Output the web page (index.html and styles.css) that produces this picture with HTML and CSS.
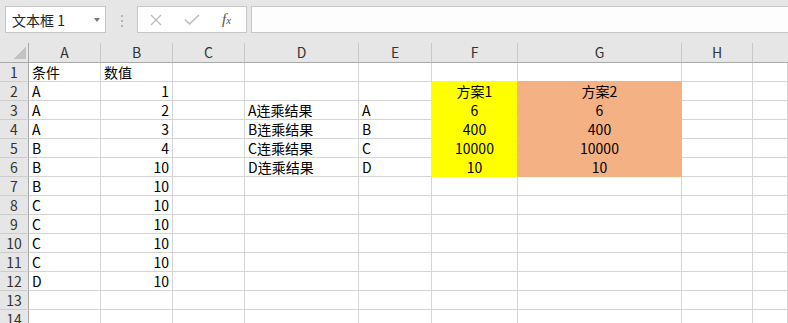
FILE: index.html
```html
<!DOCTYPE html>
<html lang="zh-CN">

<head>
    <meta charset="UTF-8">
    <meta name="viewport" content="width=device-width, initial-scale=1.0">
    <title>连乘结果</title>
    <link rel="stylesheet" href="styles.css">
</head>

<body>
    <div class="toolbar">
        <div class="name-box">
            <span>文本框 1</span>
            <span class="caret"></span>
        </div>
        <div class="grip"><i></i><i></i><i></i></div>
        <div class="fx-buttons">
            <svg class="btn-cancel" width="12" height="12" viewBox="0 0 12 12">
                <path d="M1 1 L11 11 M11 1 L1 11" stroke="#bdbdbd" stroke-width="1.4" fill="none" />
            </svg>
            <svg class="btn-enter" width="16" height="11" viewBox="0 0 16 11">
                <path d="M1 5.5 L5.5 10 L15 1" stroke="#bdbdbd" stroke-width="1.6" fill="none" />
            </svg>
            <span class="fx">f<small>x</small></span>
        </div>
        <div class="formula-input"></div>
    </div>

    <div class="sheet">
        <div class="row head">
            <div class="corner"></div>
            <div>A</div><div>B</div><div>C</div><div>D</div><div>E</div><div>F</div><div>G</div><div>H</div><div></div>
        </div>
        <div class="row">
            <div class="num">1</div>
            <div>条件</div><div>数值</div><div></div><div></div><div></div><div class="yb"></div><div class="ob"></div><div></div><div></div>
        </div>
        <div class="row">
            <div class="num">2</div>
            <div>A</div><div class="r">1</div><div></div><div></div><div class="ey"></div><div class="c y">方案1</div><div class="c o">方案2</div><div></div><div></div>
        </div>
        <div class="row">
            <div class="num">3</div>
            <div>A</div><div class="r">2</div><div></div><div>A连乘结果</div><div class="ey">A</div><div class="c y">6</div><div class="c o">6</div><div></div><div></div>
        </div>
        <div class="row">
            <div class="num">4</div>
            <div>A</div><div class="r">3</div><div></div><div>B连乘结果</div><div class="ey">B</div><div class="c y">400</div><div class="c o">400</div><div></div><div></div>
        </div>
        <div class="row">
            <div class="num">5</div>
            <div>B</div><div class="r">4</div><div></div><div>C连乘结果</div><div class="ey">C</div><div class="c y">10000</div><div class="c o">10000</div><div></div><div></div>
        </div>
        <div class="row">
            <div class="num">6</div>
            <div>B</div><div class="r">10</div><div></div><div>D连乘结果</div><div class="ey">D</div><div class="c y">10</div><div class="c o">10</div><div></div><div></div>
        </div>
        <div class="row">
            <div class="num">7</div>
            <div>B</div><div class="r">10</div><div></div><div></div><div></div><div></div><div></div><div></div><div></div>
        </div>
        <div class="row">
            <div class="num">8</div>
            <div>C</div><div class="r">10</div><div></div><div></div><div></div><div></div><div></div><div></div><div></div>
        </div>
        <div class="row">
            <div class="num">9</div>
            <div>C</div><div class="r">10</div><div></div><div></div><div></div><div></div><div></div><div></div><div></div>
        </div>
        <div class="row">
            <div class="num">10</div>
            <div>C</div><div class="r">10</div><div></div><div></div><div></div><div></div><div></div><div></div><div></div>
        </div>
        <div class="row">
            <div class="num">11</div>
            <div>C</div><div class="r">10</div><div></div><div></div><div></div><div></div><div></div><div></div><div></div>
        </div>
        <div class="row">
            <div class="num">12</div>
            <div>D</div><div class="r">10</div><div></div><div></div><div></div><div></div><div></div><div></div><div></div>
        </div>
        <div class="row">
            <div class="num">13</div>
            <div></div><div></div><div></div><div></div><div></div><div></div><div></div><div></div><div></div>
        </div>
        <div class="row">
            <div class="num">14</div>
            <div></div><div></div><div></div><div></div><div></div><div></div><div></div><div></div><div></div>
        </div>
    </div>
</body>

</html>
```

FILE: styles.css
```css
html,
body {
    margin: 0;
    height: 323px;
    overflow: hidden;
    background-color: #fff;
    font-family: "Noto Sans CJK SC", "Noto Sans", sans-serif;
    color: #000;
}

/* formula bar */

.toolbar {
    height: 43px;
    box-sizing: border-box;
    padding: 6px 0 0 5px;
    background-color: #e6e6e6;
    display: flex;
    align-items: flex-start;
    overflow: hidden;
}

.name-box {
    width: 101px;
    height: 27px;
    box-sizing: border-box;
    border: 1px solid #c6c6c6;
    background-color: #fff;
    display: flex;
    align-items: center;
    padding-left: 6px;
    font-size: 14px;
    color: #222;
}

.caret {
    margin-left: auto;
    margin-right: 5px;
    width: 0;
    height: 0;
    border-top: 4px solid #777;
    border-left: 3.5px solid transparent;
    border-right: 3.5px solid transparent;
}

.grip {
    width: 31px;
    box-sizing: border-box;
    padding: 9px 0 0 15px;
    display: flex;
    flex-direction: column;
    gap: 3px;
}

.grip i {
    display: block;
    width: 2px;
    height: 2px;
    background-color: #b4b4b4;
}

.fx-buttons {
    width: 110px;
    height: 27px;
    box-sizing: border-box;
    border: 1px solid #c6c6c6;
    background-color: #fff;
    display: flex;
    align-items: center;
    padding-left: 12px;
}

.btn-enter {
    margin-left: 22px;
}

.fx {
    margin-left: 22px;
    font-family: "Liberation Serif", serif;
    font-style: italic;
    font-size: 15px;
    color: #555;
    line-height: 1;
}

.fx small {
    font-size: 11px;
}

.formula-input {
    flex: 1;
    height: 27px;
    box-sizing: border-box;
    margin-left: 4px;
    margin-right: -2px;
    border: 1px solid #c6c6c6;
    background-color: #fdfdfd;
}

/* grid */

.row {
    display: grid;
    grid-template-columns: 29px 72px 72px 72px 114px 73px 86px 164px 71px 1fr;
}

.row > div {
    box-sizing: border-box;
    height: 19px;
    line-height: 18px;
    padding: 0 3px;
    font-size: 14px;
    white-space: nowrap;
    overflow: hidden;
    border-right: 1px solid #d4d4d4;
    border-bottom: 1px solid #d4d4d4;
}

.row.head > div {
    height: 20px;
    line-height: 19px;
    text-align: center;
    color: #333;
    background-color: #e6e6e6;
    border-right-color: #c8c8c8;
    border-bottom-color: #a9a9a9;
}

.row.head > div:last-child {
    border-right: none;
}

.row.head > .corner {
    border-right-color: #a9a9a9;
    background: linear-gradient(to bottom right, transparent 50%, #c2c2c2 50%) no-repeat right 2px bottom 3px / 12px 12px, #e6e6e6;
}

.row > .num {
    padding: 0;
    text-align: center;
    color: #333;
    background-color: #e6e6e6;
    border-right-color: #a9a9a9;
    border-bottom-color: #cdcdcd;
}

.r {
    text-align: right;
}

.row > .c {
    text-align: center;
}

.row > .y {
    background-color: #ffff00;
    border-color: #ffff00;
    border-right-color: #f4b183;
}

.row > .o {
    background-color: #f4b183;
    border-color: #f4b183;
}

/* fill covers the neighbour gridlines */
.row > .ey {
    border-right-color: #ffff00;
}

.row > .yb {
    border-bottom-color: #ffff00;
}

.row > .ob {
    border-bottom-color: #f4b183;
}
```
